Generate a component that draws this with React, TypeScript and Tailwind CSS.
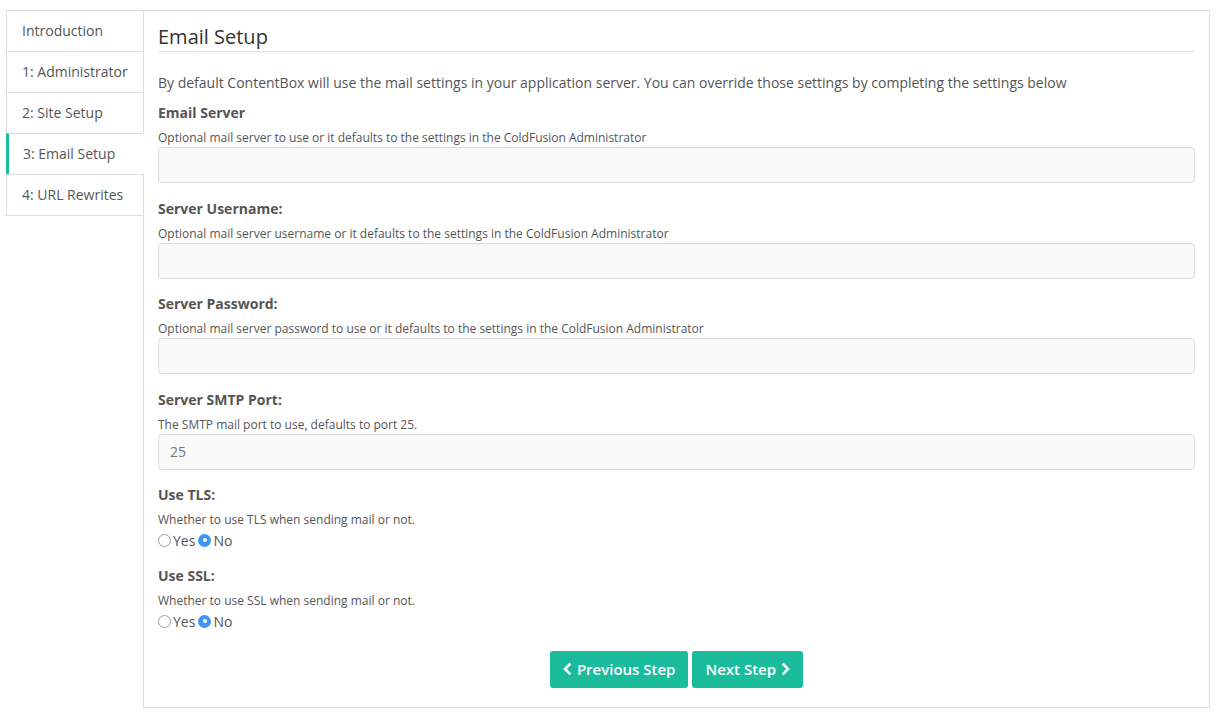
import { useState } from 'react';

const steps = ['Introduction', '1: Administrator', '2: Site Setup', '3: Email Setup', '4: URL Rewrites'];

function Field({ label, help, value, first }: { label: string; help: string; value?: string; first?: boolean }) {
  return (
    <div className={first ? 'mt-[10px]' : 'mt-[15.6px]'}>
      <label className="block text-[14px] leading-[20px] font-bold text-[#555]">{label}</label>
      <p className="mt-[6px] text-[12px] leading-[18px] text-[#555]">{help}</p>
      <input
        defaultValue={value}
        className="block w-full h-[36px] px-[11px] bg-[#f9f9f9] border border-[#dcdcdc] rounded-[4px] text-[14px] text-[#777] outline-none"
      />
    </div>
  );
}

function Radio({ checked, onClick, label }: { checked: boolean; onClick: () => void; label: string }) {
  return (
    <label className="flex items-center cursor-pointer" onClick={onClick}>
      {checked ? (
        <span className="w-[13px] h-[13px] rounded-full bg-[#3d95f5] flex items-center justify-center">
          <span className="w-[4px] h-[4px] rounded-full bg-white" />
        </span>
      ) : (
        <span className="w-[13px] h-[13px] rounded-full border border-[#9a9a9a] bg-white" />
      )}
      <span className="ml-[2px] mr-[3px]">{label}</span>
    </label>
  );
}

function YesNo({ label, help, first }: { label: string; help: string; first?: boolean }) {
  const [val, setVal] = useState(false);
  return (
    <div className={first ? 'mt-[15px]' : 'mt-[14px]'}>
      <label className="block text-[14px] leading-[20px] font-bold text-[#555]">{label}</label>
      <p className="mt-[6px] text-[12px] leading-[18px] text-[#555]">{help}</p>
      <div className="flex items-center h-[23px] text-[14px] text-[#555]">
        <Radio checked={val} onClick={() => setVal(true)} label="Yes" />
        <Radio checked={!val} onClick={() => setVal(false)} label="No" />
      </div>
    </div>
  );
}

export default function App() {
  const active = 3;
  return (
    <div className="min-h-screen bg-white pt-[10px] pl-[6px] pr-[15px] font-['Open_Sans',sans-serif] text-[#555]">
      <div className="flex items-start">
        <ul className="w-[138px] shrink-0 -mr-px relative z-10">
          {steps.map((s, i) => (
            <li
              key={s}
              className={
                i === active
                  ? 'h-[42px] flex items-center pl-[14px] pb-[1px] text-[14px] border-l-[3px] border-l-[#1abc9c] border-y border-y-[#dddddd] border-r border-r-white bg-white -mt-px first:mt-0'
                  : 'h-[42px] flex items-center pl-[15px] pb-[1px] text-[14px] border border-[#dddddd] bg-white -mt-px first:mt-0'
              }
            >
              {s}
            </li>
          ))}
        </ul>
        <div className="flex-1 border border-[#dddddd] px-[14px] pt-[12px] pb-[19px]">
          <h2 className="text-[20px] leading-[28px] text-[#333] border-b border-[#e2e2e2]">Email Setup</h2>
          <p className="mt-[21px] text-[14px] leading-[20px]">
            By default ContentBox will use the mail settings in your application server. You can override those settings by completing the settings below
          </p>
          <Field first label="Email Server" help="Optional mail server to use or it defaults to the settings in the ColdFusion Administrator" />
          <Field label="Server Username:" help="Optional mail server username or it defaults to the settings in the ColdFusion Administrator" />
          <Field label="Server Password:" help="Optional mail server password to use or it defaults to the settings in the ColdFusion Administrator" />
          <Field label="Server SMTP Port:" help="The SMTP mail port to use, defaults to port 25." value="25" />
          <YesNo first label="Use TLS:" help="Whether to use TLS when sending mail or not." />
          <YesNo label="Use SSL:" help="Whether to use SSL when sending mail or not." />
          <div className="flex justify-center gap-[4px] mt-[18px]">
            <button className="h-[37px] px-[13px] flex items-center gap-[6px] bg-[#1abc9c] text-white text-[15px] font-semibold rounded-[3px]">
              <svg width="8" height="12" viewBox="0 0 8 12" fill="none" stroke="white" strokeWidth="2.6" strokeLinecap="square">
                <path d="M6.5 1.5 L2 6 L6.5 10.5" />
              </svg>
              Previous Step
            </button>
            <button className="h-[37px] px-[13px] flex items-center gap-[6px] bg-[#1abc9c] text-white text-[15px] font-semibold rounded-[3px]">
              Next Step
              <svg width="8" height="12" viewBox="0 0 8 12" fill="none" stroke="white" strokeWidth="2.6" strokeLinecap="square">
                <path d="M1.5 1.5 L6 6 L1.5 10.5" />
              </svg>
            </button>
          </div>
        </div>
      </div>
    </div>
  );
}
